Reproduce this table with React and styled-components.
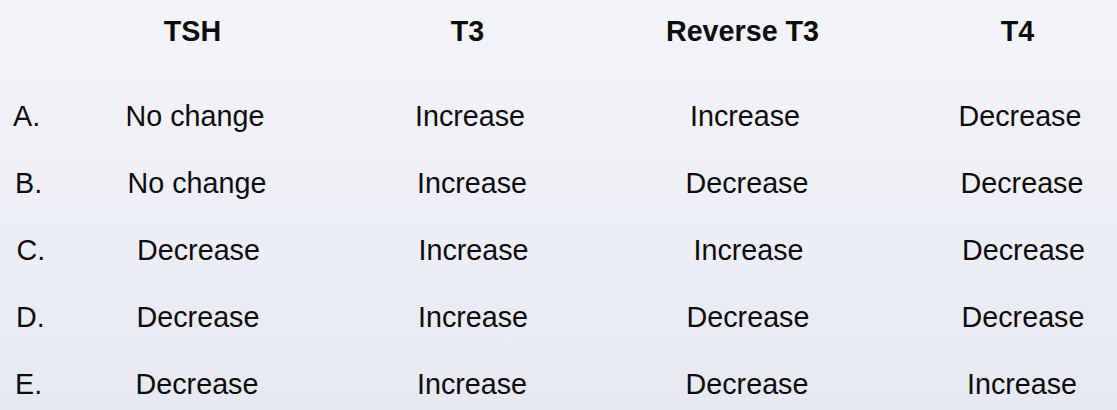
import React from "react";
import styled, { createGlobalStyle } from "styled-components";

const Global = createGlobalStyle`
  html, body {
    margin: 0;
    padding: 0;
    min-height: 410px;
    background: linear-gradient(180deg, #f3f4f8 0%, #eef0f6 45%, #e7e9f2 100%);
  }
  body {
    font-family: "Liberation Sans", Arial, sans-serif;
    color: #0d0d0d;
  }
`;

const Table = styled.div`
  display: flex;
  flex-direction: column;
  width: 1117px;
  height: 410px;
  box-sizing: border-box;
  padding-left: 15px;
`;

const Row = styled.div`
  display: grid;
  grid-template-columns: 44.5px repeat(4, 275px);
  height: ${(p) => (p.$header ? "62px" : "67px")};
  line-height: ${(p) => (p.$header ? "62px" : "67px")};
  margin-bottom: ${(p) => (p.$header ? "20.6px" : "0")};
  font-size: 28.7px;
  font-weight: ${(p) => (p.$header ? 700 : 400)};
  white-space: nowrap;
  transform: translateX(${(p) => p.$shift || 0}px);
`;

const Label = styled.div`
  text-align: left;
`;

const Cell = styled.div`
  text-align: center;
  padding-right: ${(p) => (p.$header ? "9px" : "0")};
`;

const headers = ["TSH", "T3", "Reverse T3", "T4"];

const rows = [
  { label: "A.", shift: -2, values: ["No change", "Increase", "Increase", "Decrease"] },
  { label: "B.", shift: 0, values: ["No change", "Increase", "Decrease", "Decrease"] },
  { label: "C.", shift: 1.5, values: ["Decrease", "Increase", "Increase", "Decrease"] },
  { label: "D.", shift: 1, values: ["Decrease", "Increase", "Decrease", "Decrease"] },
  { label: "E.", shift: 0, values: ["Decrease", "Increase", "Decrease", "Increase"] },
];

export default function App() {
  return (
    <>
      <Global />
      <Table>
        <Row $header>
          <Label />
          {headers.map((h) => (
            <Cell $header key={h}>
              {h}
            </Cell>
          ))}
        </Row>
        {rows.map((r) => (
          <Row key={r.label} $shift={r.shift}>
            <Label>{r.label}</Label>
            {r.values.map((v, i) => (
              <Cell key={i}>{v}</Cell>
            ))}
          </Row>
        ))}
      </Table>
    </>
  );
}
